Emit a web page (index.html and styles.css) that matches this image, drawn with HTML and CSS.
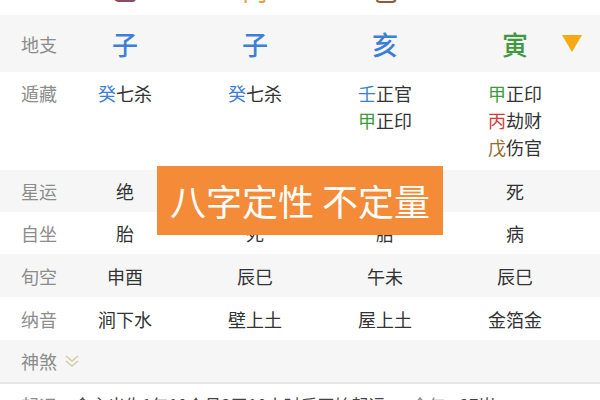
FILE: index.html
```html
<!DOCTYPE html>
<html lang="zh">
<head>
<meta charset="utf-8">
<link rel="stylesheet" href="styles.css">
</head>
<body>
<div class="page">
  <div class="row top">
    <div class="label"></div>
    <div class="cell"><span class="c-purple">乙</span></div>
    <div class="cell"><span class="c-orange">丙</span></div>
    <div class="cell"><span class="c-brown">己</span></div>
    <div class="cell"></div>
  </div>
  <div class="row grey zhi">
    <div class="label">地支</div>
    <div class="cell big blue">子</div>
    <div class="cell big blue">子</div>
    <div class="cell big blue">亥</div>
    <div class="cell big green">寅</div>
    <svg class="tri" width="20" height="17" viewBox="0 0 20 17"><polygon points="0,0 20,0 10,17" fill="#f5aa14"/></svg>
  </div>
  <div class="row hidden">
    <div class="label">遁藏</div>
    <div class="cell"><div class="stack"><div><span class="blue">癸</span>七杀</div></div></div>
    <div class="cell"><div class="stack"><div><span class="blue">癸</span>七杀</div></div></div>
    <div class="cell"><div class="stack"><div><span class="blue">壬</span>正官</div><div><span class="green">甲</span>正印</div></div></div>
    <div class="cell"><div class="stack"><div><span class="green">甲</span>正印</div><div><span class="red">丙</span>劫财</div><div><span class="brown">戊</span>伤官</div></div></div>
  </div>
  <div class="row grey r42">
    <div class="label">星运</div>
    <div class="cell">绝</div>
    <div class="cell">死</div>
    <div class="cell">胎</div>
    <div class="cell">死</div>
  </div>
  <div class="row r42">
    <div class="label">自坐</div>
    <div class="cell">胎</div>
    <div class="cell">死</div>
    <div class="cell">胎</div>
    <div class="cell">病</div>
  </div>
  <div class="row grey r43">
    <div class="label">旬空</div>
    <div class="cell">申酉</div>
    <div class="cell">辰巳</div>
    <div class="cell">午未</div>
    <div class="cell">辰巳</div>
  </div>
  <div class="row r43">
    <div class="label">纳音</div>
    <div class="cell">涧下水</div>
    <div class="cell">壁上土</div>
    <div class="cell">屋上土</div>
    <div class="cell">金箔金</div>
  </div>
  <div class="row grey shensha">
    <div class="label wide">神煞<svg class="chev" width="14" height="13" viewBox="0 0 14 13"><polyline points="1,1 7,6 13,1" fill="none" stroke="#d6cba4" stroke-width="1.6"/><polyline points="1,6 7,11 13,6" fill="none" stroke="#d6cba4" stroke-width="1.6"/></svg></div>
  </div>
  <div class="row qiyun">
    <div class="label">起运</div>
    <div class="qtext">命主出生1年10个月2天10小时后开始起运</div>
    <div class="qlabel">今年</div>
    <div class="qtext">27岁</div>
  </div>
  <div class="banner">八字定性 不定量</div>
</div>
</body>
</html>
```
FILE: styles.css
```css
html, body {
  margin: 0;
  padding: 0;
  background: #ffffff;
}
.page {
  position: relative;
  width: 600px;
  height: 400px;
  overflow: hidden;
  font-family: "Noto Sans CJK SC", "Noto Sans", sans-serif;
  color: #333333;
}
.row {
  display: flex;
  align-items: center;
  position: relative;
}
.grey {
  background: #f6f6f6;
}
.label {
  width: 60px;
  flex: 0 0 60px;
  box-sizing: border-box;
  padding-left: 21px;
  font-size: 18px;
  color: #8c8c8c;
  white-space: nowrap;
  display: flex;
  align-items: center;
}
.label.wide {
  width: auto;
  flex: 0 0 auto;
}
.cell {
  width: 130px;
  flex: 0 0 130px;
  text-align: center;
  font-size: 18px;
}
.top {
  height: 15px;
  align-items: flex-start;
  overflow: hidden;
}
.top .cell {
  font-size: 26px;
  line-height: 26px;
  margin-top: -23px;
}
.c-purple { color: #8a4a6a; }
.c-orange { color: #e0a050; }
.c-brown { color: #8a5a3a; }
.zhi {
  height: 57px;
}
.big {
  font-size: 26px;
  font-weight: 500;
}
.blue { color: #3d7fd6; }
.green { color: #3e9a3e; }
.red { color: #d83a3a; }
.brown { color: #9a6a2c; }
.tri {
  position: absolute;
  left: 562px;
  top: 20px;
}
.hidden {
  height: 98px;
  align-items: flex-start;
  padding-top: 8px;
  box-sizing: border-box;
}
.hidden .label {
  line-height: 27px;
}
.stack {
  display: inline-block;
  text-align: left;
  line-height: 27px;
}
.r42 { height: 42px; }
.r43 { height: 43px; }
.shensha {
  height: 42px;
  border-bottom: 2px solid #e6e6e6;
}
.chev {
  margin-left: 8px;
  flex: 0 0 auto;
}
.qiyun {
  height: 40px;
  align-items: flex-start;
  padding-top: 8px;
  box-sizing: border-box;
  font-size: 17px;
}
.qtext {
  margin-left: 14px;
  color: #444444;
}
.qlabel {
  margin-left: 26px;
  color: #8a8a8a;
}
.banner {
  position: absolute;
  left: 157px;
  top: 166px;
  width: 286px;
  height: 69px;
  background: #f48b38;
  color: #ffffff;
  font-size: 36px;
  line-height: 69px;
  text-align: center;
  font-weight: 400;
  white-space: nowrap;
}
```
